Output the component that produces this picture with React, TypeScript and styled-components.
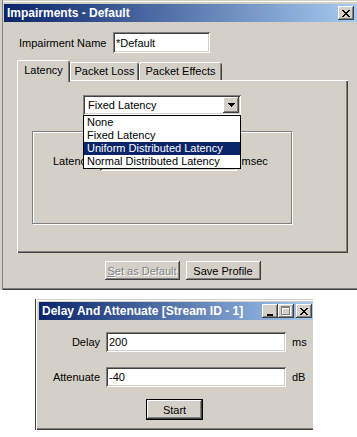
import styled, { createGlobalStyle } from 'styled-components';

const GlobalStyle = createGlobalStyle`
	html, body {
		margin: 0;
		padding: 0;
		background: #fff;
	}
	body {
		font-family: "Liberation Sans", Arial, sans-serif;
		font-size: 11px;
		color: #000;
	}
`;

const face = '#d4d0c8';

const raised = `box-shadow: inset -1px -1px #404040, inset 1px 1px #fff, inset -2px -2px #808080, inset 2px 2px ${face};`;
const sunken = `box-shadow: inset 1px 1px #808080, inset -1px -1px #fff, inset 2px 2px #404040, inset -2px -2px ${face};`;

const latencyModes = ['None', 'Fixed Latency', 'Uniform Distributed Latency', 'Normal Distributed Latency'];

const CloseIcon = () => (
	<svg width="8" height="7" viewBox="0 0 8 7" shapeRendering="crispEdges">
		<path
			fill="#000"
			d="M0 0h2v1H0zM6 0h2v1H6zM1 1h2v1H1zM5 1h2v1H5zM2 2h4v1H2zM3 3h2v1H3zM2 4h4v1H2zM1 5h2v1H1zM5 5h2v1H5zM0 6h2v1H0zM6 6h2v1H6z"
		/>
	</svg>
);

const MinIcon = () => (
	<svg width="8" height="9" viewBox="0 0 8 9" shapeRendering="crispEdges">
		<path fill="#000" d="M1 7h6v2H1z" />
	</svg>
);

const MaxIcon = () => (
	<svg width="10" height="10" viewBox="0 0 10 10" shapeRendering="crispEdges">
		<path fill="#fff" d="M1 1h9v9H1zM2 3v6h7V3z" />
		<path fill="#808080" d="M0 0h9v9H0zM1 2v6h7V2z" />
	</svg>
);

const ArrowIcon = () => (
	<svg width="7" height="4" viewBox="0 0 7 4" shapeRendering="crispEdges">
		<path fill="#000" d="M0 0h7v1H0zM1 1h5v1H1zM2 2h3v1H2zM3 3h1v1H3z" />
	</svg>
);

export default function App() {
	return (
		<>
			<GlobalStyle />
			<TopWindow>
				<TitleBar $padRight={3}>
					<span>Impairments - Default</span>
					<CapButton>
						<CloseIcon />
					</CapButton>
				</TitleBar>
				<Body>
					<NameRow>
						<NameLabel>Impairment Name</NameLabel>
						<Field $width={97} $height={21}>
							*Default
						</Field>
					</NameRow>
					<TabStrip>
						<Tab $active $width={53}>
							Latency
						</Tab>
						<Tab $width={69}>Packet Loss</Tab>
						<Tab $width={83}>Packet Effects</Tab>
					</TabStrip>
					<TabPanel>
						<ComboWrap>
							<Combo>
								<span>Fixed Latency</span>
								<ComboButton>
									<ArrowIcon />
								</ComboButton>
							</Combo>
							<DropList>
								{latencyModes.map((mode, i) => (
									<DropItem key={mode} $selected={i === 2}>
										{mode}
									</DropItem>
								))}
							</DropList>
						</ComboWrap>
						<GroupBox>
							<LatencyRow>
								<span>Latency</span>
								<Field $width={137} $height={21} />
								<span>msec</span>
							</LatencyRow>
						</GroupBox>
					</TabPanel>
					<ButtonRow>
						<Button $disabled>
							<u>S</u>et as Default
						</Button>
						<Button>Save Profile</Button>
					</ButtonRow>
				</Body>
			</TopWindow>

			<DelayWindow>
				<TitleBar $padRight={1}>
					<span>Delay And Attenuate [Stream ID - 1]</span>
					<CapGroup>
						<CapButton>
							<MinIcon />
						</CapButton>
						<CapButton>
							<MaxIcon />
						</CapButton>
						<CapButton $gap>
							<CloseIcon />
						</CapButton>
					</CapGroup>
				</TitleBar>
				<FormGrid>
					<FormLabel>Delay</FormLabel>
					<Field $width={180} $height={20}>
						200
					</Field>
					<span>ms</span>
					<FormLabel>Attenuate</FormLabel>
					<Field $width={180} $height={20}>
						-40
					</Field>
					<span>dB</span>
				</FormGrid>
				<StartRow>
					<DefaultButton>Start</DefaultButton>
				</StartRow>
			</DelayWindow>
		</>
	);
}

const TopWindow = styled.div`
	box-sizing: border-box;
	width: 357px;
	height: 290px;
	padding: 4px 0 0 4px;
	background: ${face};
	box-shadow: inset 2px 0 ${face}, inset 3px 0 #808080, inset 0 1px ${face}, inset 0 2px #fff,
		inset 0 -1px #404040, inset 0 -2px #808080;
`;

const TitleBar = styled.div<{ $padRight: number }>`
	height: 18px;
	display: flex;
	align-items: center;
	justify-content: space-between;
	padding: 0 ${(p) => p.$padRight}px 0 3px;
	background: linear-gradient(to right, #0a246a, #a6caf0);
	color: #fff;
	font-weight: bold;
	font-size: 12px;
	white-space: nowrap;
`;

const CapGroup = styled.div`
	display: flex;
`;

const CapButton = styled.div<{ $gap?: boolean }>`
	width: 16px;
	height: 14px;
	margin-left: ${(p) => (p.$gap ? 2 : 0)}px;
	display: flex;
	align-items: center;
	justify-content: center;
	background: ${face};
	${raised}

	svg {
		display: block;
	}
`;

const Body = styled.div`
	padding: 0 0 0 13px;
`;

const NameRow = styled.div`
	display: flex;
	align-items: center;
	margin-top: 10px;
	padding-left: 2px;
`;

const NameLabel = styled.span`
	width: 94px;
	white-space: nowrap;
`;

const Field = styled.div<{ $width: number; $height: number }>`
	box-sizing: border-box;
	width: ${(p) => p.$width}px;
	height: ${(p) => p.$height}px;
	padding: 0 3px;
	display: flex;
	align-items: center;
	background: #fff;
	white-space: nowrap;
	${sunken}
`;

const TabStrip = styled.div`
	display: flex;
	align-items: flex-end;
	height: 20px;
	margin-top: 7px;
`;

const Tab = styled.div<{ $active?: boolean; $width: number }>`
	position: relative;
	z-index: ${(p) => (p.$active ? 1 : 0)};
	box-sizing: border-box;
	width: ${(p) => p.$width}px;
	height: ${(p) => (p.$active ? 22 : 18)}px;
	margin-bottom: ${(p) => (p.$active ? -2 : 0)}px;
	padding-bottom: ${(p) => (p.$active ? 3 : 0)}px;
	display: flex;
	align-items: center;
	justify-content: center;
	background: ${face};
	border-radius: 2px 2px 0 0;
	box-shadow: inset 1px 0 #fff, inset 0 1px #fff, inset -1px 0 #404040, inset -2px 0 #808080;
`;

const TabPanel = styled.div`
	box-sizing: border-box;
	width: 331px;
	height: 173px;
	padding: 15px 0 0 15px;
	box-shadow: inset 1px 1px #fff, inset -1px -1px #404040, inset -2px -2px #808080;
`;

const ComboWrap = styled.div`
	position: relative;
	width: 158px;
	margin-left: 51px;
`;

const Combo = styled.div`
	box-sizing: border-box;
	height: 20px;
	padding: 2px 2px 2px 5px;
	display: flex;
	align-items: center;
	justify-content: space-between;
	background: #fff;
	${sunken}
`;

const ComboButton = styled.div`
	width: 16px;
	height: 16px;
	display: flex;
	align-items: center;
	justify-content: center;
	background: ${face};
	${raised}
`;

const DropList = styled.div`
	position: absolute;
	z-index: 5;
	top: 100%;
	left: 0;
	width: 158px;
	box-sizing: border-box;
	border: 1px solid #000;
	background: #fff;
`;

const DropItem = styled.div<{ $selected?: boolean }>`
	height: 13px;
	line-height: 13px;
	padding-left: 3px;
	white-space: nowrap;
	background: ${(p) => (p.$selected ? '#0a246a' : '#fff')};
	color: ${(p) => (p.$selected ? '#fff' : '#000')};
`;

const GroupBox = styled.div`
	box-sizing: border-box;
	width: 260px;
	height: 93px;
	margin-top: 16px;
	padding: 18px 0 0 20px;
	border: 1px solid #808080;
	box-shadow: inset 1px 1px #fff, 1px 1px #fff;
`;

const LatencyRow = styled.div`
	display: flex;
	align-items: center;
	gap: 8px;

	span:last-child {
		margin-left: -3px;
	}
`;

const ButtonRow = styled.div`
	display: flex;
	justify-content: center;
	gap: 6px;
	width: 331px;
	margin-top: 8px;
`;

const Button = styled.div<{ $disabled?: boolean }>`
	box-sizing: border-box;
	width: 75px;
	height: 19px;
	display: flex;
	align-items: center;
	justify-content: center;
	background: ${face};
	color: ${(p) => (p.$disabled ? '#808080' : '#000')};
	text-shadow: ${(p) => (p.$disabled ? '1px 1px #fff' : 'none')};
	${raised}
`;

const DelayWindow = styled.div`
	box-sizing: border-box;
	width: 278px;
	height: 131px;
	margin: 9px 0 0 35px;
	padding: 3px 0 0 4px;
	background: ${face};
	box-shadow: inset 1px 0 #404040, inset 2px 0 #fff, inset 0 1px ${face}, inset 0 2px #fff,
		inset 0 -1px #404040, inset 0 -2px #808080;
`;

const FormGrid = styled.div`
	display: grid;
	grid-template-columns: 61px 180px auto;
	column-gap: 6px;
	row-gap: 15px;
	align-items: center;
	margin-top: 12px;
`;

const FormLabel = styled.span`
	text-align: right;
`;

const StartRow = styled.div`
	display: flex;
	justify-content: center;
	margin-top: 12px;
	padding-right: 3px;
`;

const DefaultButton = styled.div`
	box-sizing: border-box;
	width: 57px;
	height: 21px;
	display: flex;
	align-items: center;
	justify-content: center;
	background: ${face};
	border: 1px solid #000;
	${raised}
`;
